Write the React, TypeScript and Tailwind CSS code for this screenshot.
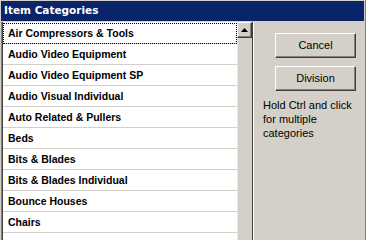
const categories = [
  "Air Compressors & Tools",
  "Audio Video Equipment",
  "Audio Video Equipment SP",
  "Audio Visual Individual",
  "Auto Related & Pullers",
  "Beds",
  "Bits & Blades",
  "Bits & Blades Individual",
  "Bounce Houses",
  "Chairs",
];

// classic raised 3d button edge
const raised =
  "border border-t-white border-l-white border-r-[#404040] border-b-[#404040] shadow-[inset_-1px_-1px_0_#808080]";

const App = () => {
  return (
    <div className="w-[368px] h-[240px] bg-white overflow-hidden">
      <div className="w-[366px] h-[240px] bg-[#d4d0c8] border-r border-[#808080] pl-px pt-px flex flex-col">
        {/* title bar */}
        <div className="h-[20px] w-[363px] bg-[#0a246a] text-white font-bold text-[10.5px] font-['DejaVu_Sans',sans-serif] flex items-center pl-[3px] shrink-0">
          Item Categories
        </div>

        <div className="flex flex-1 min-h-0 mt-px">
          {/* list box */}
          <div className="flex w-[252px] border-l border-[#808080] overflow-hidden">
            <div className="flex border-l border-[#404040]">
              <ul className="w-[234px] bg-white pt-px font-['Liberation_Sans',Arial,sans-serif] font-bold text-[10.5px] text-black">
                {categories.map((c, i) => (
                  <li
                    key={c}
                    className={
                      "h-[21px] border-b border-[#d4d0c8] flex items-center pl-[5px] pt-[2px] " +
                      (i === 0 ? "outline-1 outline-dotted outline-black -outline-offset-1" : "")
                    }
                  >
                    {c}
                  </li>
                ))}
              </ul>
              {/* scrollbar */}
              <div className="w-[15px] bg-[#d4d0c8] border-l border-[#e8e8e8] flex flex-col">
                <div className={"h-[16px] w-[15px] -ml-px flex items-center justify-center " + raised}>
                  <svg width="7" height="4" viewBox="0 0 7 4">
                    <path d="M3.5 0 L7 4 L0 4 Z" fill="#000" />
                  </svg>
                </div>
              </div>
              <div className="w-px bg-[#404040]" />
            </div>
          </div>

          {/* right panel */}
          <div className="flex-1 border-l border-white flex flex-col pl-[21px] pt-[11px] font-['Liberation_Sans',Arial,sans-serif] text-[11px] text-black">
            <button className={"w-[81px] h-[25px] bg-[#d4d0c8] " + raised}>Cancel</button>
            <button className={"w-[81px] h-[25px] bg-[#d4d0c8] mt-[8px] " + raised}>Division</button>
            <p className="-ml-[12px] mt-[7px] leading-[14px] w-[98px]">
              Hold Ctrl and click for multiple categories
            </p>
          </div>
        </div>
      </div>
    </div>
  );
};

export default App;
